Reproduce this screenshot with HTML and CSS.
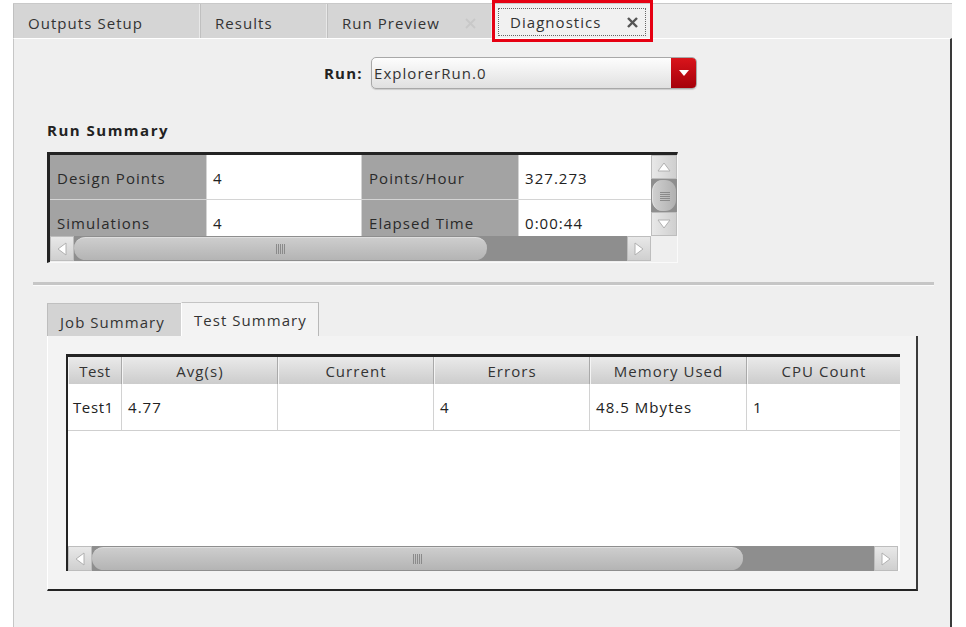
FILE: index.html
```html
<!DOCTYPE html>
<html>
<head>
<meta charset="utf-8">
<link rel="stylesheet" href="styles.css">
</head>
<body>
<div class="window">
  <div class="tabbar">
    <div class="tab t1">Outputs Setup</div>
    <div class="tab t2">Results</div>
    <div class="tab t3">Run Preview<svg class="close" width="11" height="11" viewBox="0 0 11 11"><g stroke="#c8c8c8" stroke-width="1.8"><line x1="1" y1="1" x2="10" y2="10"/><line x1="10" y1="1" x2="1" y2="10"/></g></svg></div>
    <div class="tab t4 active"><div class="focus">Diagnostics<svg class="close" width="11" height="11" viewBox="0 0 11 11"><g stroke="#555" stroke-width="2.4"><line x1="1" y1="1" x2="10" y2="10"/><line x1="10" y1="1" x2="1" y2="10"/></g></svg></div></div>
  </div>
  <div class="highlight"></div>
  <div class="panel">
    <div class="runrow">
      <span class="runlabel">Run:</span>
      <div class="combo">
        <span class="combotext">ExplorerRun.0</span>
        <div class="combobtn"><svg width="10" height="6" viewBox="0 0 10 6"><polygon points="0,0 10,0 5,6" fill="#fff"/></svg></div>
      </div>
    </div>
    <div class="heading">Run Summary</div>
    <div class="sumframe">
      <div class="sumgrid">
        <div class="cells">
          <div class="lab">Design Points</div><div class="val">4</div><div class="lab">Points/Hour</div><div class="val last">327.273</div>
          <div class="lab">Simulations</div><div class="val">4</div><div class="lab">Elapsed Time</div><div class="val last">0:00:44</div>
        </div>
        <div class="vscroll">
          <div class="varrow"><svg width="14" height="10" viewBox="0 0 14 10"><polygon points="1,9 13,9 7,1" fill="#fff" stroke="#b0b0b0"/></svg></div>
          <div class="vthumb"><svg width="10" height="10" viewBox="0 0 10 10"><g stroke="#8a8a8a" stroke-width="1"><line x1="0" y1="1.5" x2="10" y2="1.5"/><line x1="0" y1="3.5" x2="10" y2="3.5"/><line x1="0" y1="5.5" x2="10" y2="5.5"/><line x1="0" y1="7.5" x2="10" y2="7.5"/><line x1="0" y1="9.5" x2="10" y2="9.5"/></g></svg></div>
          <div class="varrow"><svg width="14" height="10" viewBox="0 0 14 10"><polygon points="1,1 13,1 7,9" fill="#fff" stroke="#b0b0b0"/></svg></div>
        </div>
        <div class="hscroll">
          <div class="harrow"><svg width="10" height="14" viewBox="0 0 10 14"><polygon points="9,1 9,13 1,7" fill="#fff" stroke="#b0b0b0"/></svg></div>
          <div class="hthumb small"><svg width="11" height="10" viewBox="0 0 11 10"><g stroke="#8a8a8a"><line x1="1.5" y1="0" x2="1.5" y2="10"/><line x1="3.5" y1="0" x2="3.5" y2="10"/><line x1="5.5" y1="0" x2="5.5" y2="10"/><line x1="7.5" y1="0" x2="7.5" y2="10"/><line x1="9.5" y1="0" x2="9.5" y2="10"/></g></svg></div>
          <div class="track"></div>
          <div class="harrow"><svg width="10" height="14" viewBox="0 0 10 14"><polygon points="1,1 1,13 9,7" fill="#fff" stroke="#b0b0b0"/></svg></div>
        </div>
        <div class="corner"></div>
      </div>
    </div>
    <div class="sep"></div>
    <div class="subtabs">
      <div class="subtab job">Job Summary</div>
      <div class="subtab test">Test Summary</div>
    </div>
    <div class="subpanel">
      <div class="testtable">
        <div class="thead">
          <div class="th c1">Test</div>
          <div class="th c2">Avg(s)</div>
          <div class="th c3">Current</div>
          <div class="th c4">Errors</div>
          <div class="th c5">Memory Used</div>
          <div class="th c6">CPU Count</div>
        </div>
        <div class="trow">
          <div class="td c1">Test1</div>
          <div class="td c2">4.77</div>
          <div class="td c3"></div>
          <div class="td c4">4</div>
          <div class="td c5">48.5 Mbytes</div>
          <div class="td c6">1</div>
        </div>
        <div class="tbody-empty"></div>
        <div class="hscroll wide">
          <div class="harrow"><svg width="10" height="14" viewBox="0 0 10 14"><polygon points="9,1 9,13 1,7" fill="#fff" stroke="#b0b0b0"/></svg></div>
          <div class="hthumb big"><svg width="11" height="10" viewBox="0 0 11 10"><g stroke="#8a8a8a"><line x1="1.5" y1="0" x2="1.5" y2="10"/><line x1="3.5" y1="0" x2="3.5" y2="10"/><line x1="5.5" y1="0" x2="5.5" y2="10"/><line x1="7.5" y1="0" x2="7.5" y2="10"/><line x1="9.5" y1="0" x2="9.5" y2="10"/></g></svg></div>
          <div class="track"></div>
          <div class="harrow"><svg width="10" height="14" viewBox="0 0 10 14"><polygon points="1,1 1,13 9,7" fill="#fff" stroke="#b0b0b0"/></svg></div>
        </div>
      </div>
    </div>
  </div>
</div>
</body>
</html>
```

FILE: styles.css
```css
* { box-sizing: border-box; }

body {
  margin: 0;
  background: #ffffff;
  font-family: "Open Sans", "DejaVu Sans", sans-serif;
  font-size: 15px;
  letter-spacing: 1.05px;
  color: #333;
  overflow: hidden;
}

.window {
  margin-left: 13px;
  width: 939px;
  height: 627px;
  display: flex;
  flex-direction: column;
  position: relative;
}

/* top tab bar */
.tabbar {
  margin-top: 3px;
  height: 35px;
  display: flex;
  background: #ececec;
  border-top: 1px solid #c9c9c9;
}

.tab {
  height: 34px;
  display: flex;
  align-items: center;
  padding-left: 14px;
  padding-top: 4px;
  background: #d5d5d5;
  border-left: 1px solid #c0c0c0;
  border-right: 1px solid #e8e8e8;
  color: #333;
}

.t1 { width: 187px; }
.t2 { width: 127px; }
.t3 { width: 165px; padding-right: 15px; }
.t4 { width: 160px; padding-left: 5px; padding-top: 0; background: #f1f1f1; height: 35px; }

.close {
  margin-left: auto;
  flex: none;
}

.focus {
  display: flex;
  align-items: center;
  width: 148px;
  height: 28px;
  margin-top: 1px;
  padding-left: 11px;
  padding-right: 7px;
  border: 1px dotted #666;
}

.highlight {
  position: absolute;
  left: 479px;
  top: 0;
  width: 161px;
  height: 42px;
  border: 3px solid #e60012;
}

/* main panel */
.panel {
  flex: 1;
  background: #efefef;
  border-left: 1px solid #c6c6c6;
  border-right: 2px solid #3a3a3a;
  border-top: 1px solid #ffffff;
  display: flex;
  flex-direction: column;
}

.runrow {
  margin-top: 18px;
  height: 32px;
  display: flex;
  align-items: center;
  padding-left: 310px;
}

.runlabel {
  width: 47px;
  font-weight: bold;
  letter-spacing: 1.2px;
  color: #222;
}

.combo {
  width: 326px;
  height: 32px;
  border: 1px solid #a8a8a8;
  border-radius: 5px;
  background: linear-gradient(#fdfdfd, #ececec 60%, #e0e0e0);
  display: flex;
  align-items: center;
  overflow: hidden;
  box-shadow: 0 1px 1px rgba(0,0,0,0.15);
}

.combotext {
  flex: 1;
  padding-left: 2px;
  color: #333;
}

.combobtn {
  width: 25px;
  height: 100%;
  background: linear-gradient(#d9141b, #a5000a);
  display: flex;
  align-items: center;
  justify-content: center;
}

.heading {
  margin-top: 31px;
  margin-left: 33px;
  height: 21px;
  font-weight: bold;
  letter-spacing: 1.5px;
  color: #222;
}

/* run summary table */
.sumframe {
  margin-top: 11px;
  margin-left: 33px;
  width: 631px;
  height: 111px;
  border-top: 3px solid #232323;
  border-left: 3px solid #232323;
  border-right: 1px solid #fafafa;
  border-bottom: 1px solid #fafafa;
}

.sumgrid {
  display: grid;
  grid-template-columns: 601px 26px;
  grid-template-rows: 81px 25px;
}

.cells {
  display: grid;
  grid-template-columns: 157px 155px 157px 132px;
  grid-auto-rows: 45px;
  overflow: hidden;
  height: 81px;
}

.lab, .val {
  display: flex;
  align-items: center;
  padding-top: 2px;
  border-bottom: 1px solid #d4d4d4;
  border-right: 1px solid #d4d4d4;
}

.lab {
  background: #a3a3a3;
  padding-left: 7px;
  color: #2a2a2a;
}

.val {
  background: #ffffff;
  padding-left: 6px;
  color: #222;
}

.val.last { border-right: none; }

.vscroll {
  display: flex;
  flex-direction: column;
  background: #8e8e8e;
}

.varrow {
  height: 24px;
  background: linear-gradient(90deg, #e8e8e8, #cfcfcf);
  border: 1px solid #bdbdbd;
  display: flex;
  align-items: center;
  justify-content: center;
}

.vthumb {
  flex: 1;
  margin: 1px 1px;
  border-radius: 11px;
  background: linear-gradient(90deg, #cfcfcf, #b0b0b0);
  border-left: 1px solid #e2e2e2;
  display: flex;
  align-items: center;
  justify-content: center;
}

.hscroll {
  display: flex;
  height: 25px;
  background: #8e8e8e;
}

.harrow {
  width: 24px;
  flex: none;
  background: linear-gradient(#e8e8e8, #cfcfcf);
  border: 1px solid #bdbdbd;
  display: flex;
  align-items: center;
  justify-content: center;
}

.hthumb {
  flex: none;
  height: 23px;
  margin-top: 1px;
  border-radius: 12px;
  background: linear-gradient(#cdcdcd, #b4b4b4);
  border-top: 1px solid #dedede;
  display: flex;
  align-items: center;
  justify-content: center;
}

.hthumb.small { width: 413px; }
.hthumb.big { width: 651px; }

.track { flex: 1; }

.corner { background: #efefef; }

.sep {
  margin-top: 19px;
  margin-left: 19px;
  width: 901px;
  height: 4px;
  background: #c6c6c6;
  border-bottom: 1px solid #fafafa;
}

/* sub tabs */
.subtabs {
  margin-top: 16px;
  margin-left: 33px;
  display: flex;
  height: 34px;
}

.subtab {
  height: 34px;
  display: flex;
  align-items: center;
  padding-top: 2px;
  color: #333;
}

.subtab.job {
  width: 134px;
  padding-left: 12px;
  background: #d3d3d3;
  border-top: 1px solid #c0c0c0;
  border-left: 1px solid #bdbdbd;
  margin-top: 1px;
}

.subtab.test {
  width: 138px;
  padding-left: 12px;
  padding-top: 0;
  background: #f3f3f3;
  border-top: 1px solid #c4c4c4;
  border-right: 1px solid #b8b8b8;
  border-left: 1px solid #ffffff;
}

.subpanel {
  margin-left: 33px;
  width: 871px;
  height: 255px;
  background: #f3f3f3;
  border-left: 1px solid #ffffff;
  border-bottom: 2px solid #232323;
  border-right: 2px solid #3a3a3a;
  padding: 18px 0 0 18px;
}

.testtable {
  width: 834px;
  height: 217px;
  border-top: 3px solid #232323;
  border-left: 2px solid #232323;
  background: #ffffff;
  display: flex;
  flex-direction: column;
}

.thead, .trow {
  display: flex;
}

.th {
  height: 27px;
  display: flex;
  align-items: center;
  justify-content: center;
  background: linear-gradient(#eaeaea, #cccccc);
  border-right: 1px solid #a9a9a9;
  border-left: 1px solid #f4f4f4;
  color: #333;
}

.td {
  height: 47px;
  display: flex;
  align-items: center;
  padding-left: 6px;
  border-right: 1px solid #d2d2d2;
  border-bottom: 1px solid #cfcfcf;
  color: #222;
}

.c1 { width: 54px; }
.c2 { width: 156px; }
.c3 { width: 156px; }
.c4 { width: 156px; }
.c5 { width: 157px; }
.c6 { width: 153px; border-right: none; }

.td.c1 { padding-left: 5px; letter-spacing: 0.6px; }
.th.c1 { letter-spacing: 0.6px; }

.tbody-empty { flex: 1; }

.hscroll.wide { width: 830px; flex: none; }
```
